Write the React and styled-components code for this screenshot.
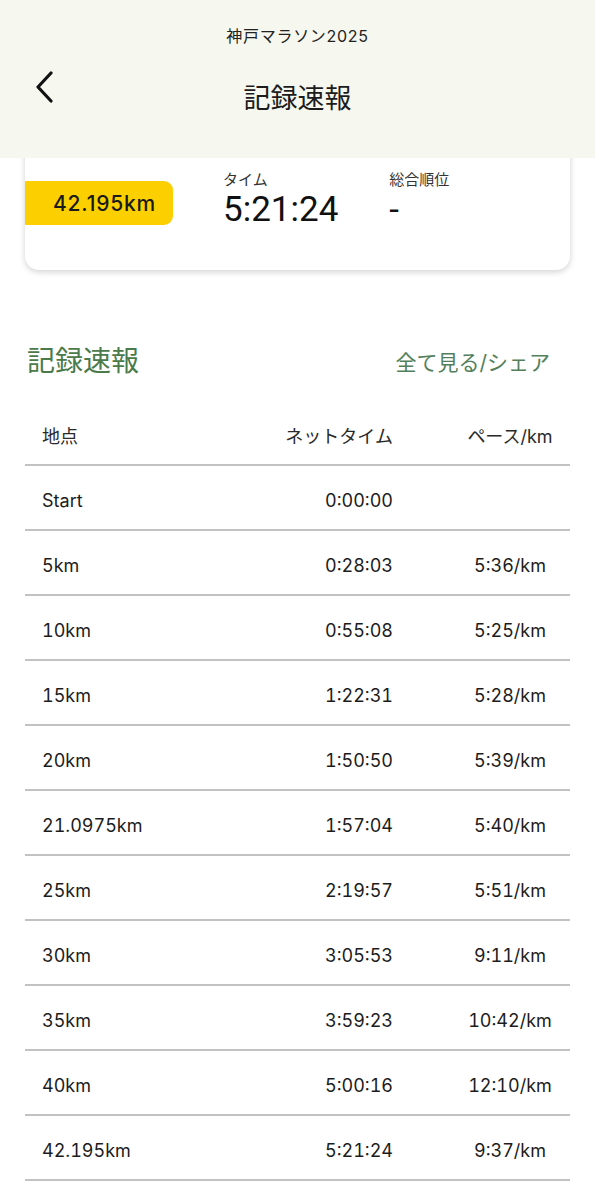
import React from "react";
import styled, { createGlobalStyle } from "styled-components";

const GlobalStyle = createGlobalStyle`
    body {
        margin: 0;
        background: #ffffff;
        font-family: Inter, "Noto Sans CJK JP", sans-serif;
        color: #1c1c1c;
    }
`;

const Page = styled.div`
    width: 595px;
    padding-bottom: 20px;
`;

const Header = styled.header`
    position: relative;
    z-index: 2;
    height: 158px;
    background: #f6f7ef;
    display: flex;
    flex-direction: column;
    align-items: center;
`;

const EventName = styled.div`
    margin-top: 26px;
    font-size: 16px;
    line-height: 20px;
    letter-spacing: 0.7px;
    color: #222;
`;

const TitleRow = styled.div`
    width: 100%;
    margin-top: 35px;
    display: grid;
    grid-template-columns: 70px 1fr 70px;
    align-items: center;
`;

const BackButton = styled.button`
    border: none;
    background: transparent;
    padding: 0 0 0 34px;
    height: 40px;
    display: flex;
    align-items: center;
    margin-top: -24px;
`;

const PageTitle = styled.h1`
    margin: 0;
    text-align: center;
    font-size: 27px;
    line-height: 36px;
    font-weight: 400;
    color: #1c1c1c;
`;

const Card = styled.section`
    position: relative;
    z-index: 1;
    margin: -20px 25px 0;
    padding-top: 32px;
    padding-bottom: 40px;
    background: #fff;
    border-radius: 0 0 14px 14px;
    box-shadow: 0 2px 6px rgba(0, 0, 0, 0.18);
    display: flex;
    align-items: flex-start;
`;

const DistanceTag = styled.div`
    width: 148px;
    height: 44px;
    margin-top: 11px;
    box-sizing: border-box;
    padding-left: 28px;
    display: flex;
    align-items: center;
    background: #fcd000;
    border-radius: 0 9px 9px 0;
    font-size: 21px;
    font-weight: 500;
    letter-spacing: 0.8px;
    color: #1a1a1a;
`;

const Stat = styled.div`
    margin-left: ${(p) => p.$offset}px;
    display: flex;
    flex-direction: column;
`;

const StatLabel = styled.span`
    font-size: 15px;
    line-height: 20px;
    color: #333;
`;

const StatValue = styled.span`
    font-family: Roboto, "Noto Sans CJK JP", sans-serif;
    font-size: 35px;
    line-height: 40px;
    color: #111;
`;

const SectionHead = styled.div`
    margin: 73px 45px 0 27px;
    display: flex;
    align-items: center;
    justify-content: space-between;
`;

const SectionTitle = styled.h2`
    margin: 0;
    font-size: 28px;
    line-height: 36px;
    font-weight: 400;
    color: #4b7a4b;
`;

const SectionLink = styled.a`
    font-size: 21px;
    color: #53805a;
    text-decoration: none;
`;

const Table = styled.div`
    margin: 27px 25px 0;
`;

const Row = styled.div`
    display: grid;
    grid-template-columns: 1fr 140px 120px;
    column-gap: 57px;
    align-items: center;
    padding: ${(p) => (p.$head ? 0 : 5)}px 0 0 17px;
    height: ${(p) => (p.$head ? 60 : 65)}px;
    box-sizing: border-box;
    border-bottom: 2px solid #c2c2c2;
    font-size: 18px;
    font-variant-numeric: tabular-nums;
    color: ${(p) => (p.$head ? "#2a2a2a" : "#1c1c1c")};
`;

const Cell = styled.div`
    text-align: ${(p) => p.$align || "left"};
    white-space: nowrap;
`;

const splits = [
    ["Start", "0:00:00", ""],
    ["5km", "0:28:03", "5:36/km"],
    ["10km", "0:55:08", "5:25/km"],
    ["15km", "1:22:31", "5:28/km"],
    ["20km", "1:50:50", "5:39/km"],
    ["21.0975km", "1:57:04", "5:40/km"],
    ["25km", "2:19:57", "5:51/km"],
    ["30km", "3:05:53", "9:11/km"],
    ["35km", "3:59:23", "10:42/km"],
    ["40km", "5:00:16", "12:10/km"],
    ["42.195km", "5:21:24", "9:37/km"],
];

export default function App() {
    return (
        <Page>
            <GlobalStyle />
            <Header>
                <EventName>神戸マラソン2025</EventName>
                <TitleRow>
                    <BackButton aria-label="戻る">
                        <svg width="20" height="32" viewBox="0 0 20 32">
                            <path d="M17 2 L4 16 L17 30" fill="none" stroke="#111" strokeWidth="3.2" strokeLinecap="round" strokeLinejoin="round" />
                        </svg>
                    </BackButton>
                    <PageTitle>記録速報</PageTitle>
                    <div />
                </TitleRow>
            </Header>

            <Card>
                <DistanceTag>42.195km</DistanceTag>
                <Stat $offset={50}>
                    <StatLabel>タイム</StatLabel>
                    <StatValue>5:21:24</StatValue>
                </Stat>
                <Stat $offset={51}>
                    <StatLabel>総合順位</StatLabel>
                    <StatValue>-</StatValue>
                </Stat>
            </Card>

            <SectionHead>
                <SectionTitle>記録速報</SectionTitle>
                <SectionLink>全て見る/シェア</SectionLink>
            </SectionHead>

            <Table>
                <Row $head>
                    <Cell>地点</Cell>
                    <Cell $align="right">ネットタイム</Cell>
                    <Cell $align="center">ペース/km</Cell>
                </Row>
                {splits.map(([point, time, pace]) => (
                    <Row key={point}>
                        <Cell>{point}</Cell>
                        <Cell $align="right">{time}</Cell>
                        <Cell $align="center">{pace}</Cell>
                    </Row>
                ))}
            </Table>
        </Page>
    );
}
